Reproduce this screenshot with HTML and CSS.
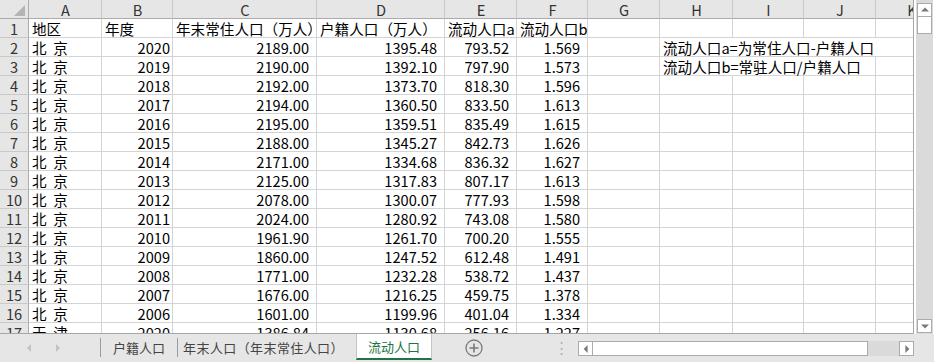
FILE: index.html
```html
<!DOCTYPE html>
<html lang="zh-CN">
<head>
    <meta charset="UTF-8">
    <title>流动人口</title>
    <link rel="stylesheet" href="styles.css">
</head>
<body>
    <div class="app">
        <div class="sheet-area">
            <div class="grid">
                <table class="cells">
                    <colgroup>
                        <col class="c-row">
                        <col style="width: 73px">
                        <col style="width: 71px">
                        <col style="width: 144px">
                        <col style="width: 128px">
                        <col style="width: 72px">
                        <col style="width: 71px">
                        <col style="width: 72px">
                        <col style="width: 73px">
                        <col style="width: 71px">
                        <col style="width: 72px">
                        <col style="width: 72px">
                    </colgroup>
                    <tr class="col-heads">
                        <th class="corner"></th>
                        <th>A</th><th>B</th><th>C</th><th>D</th><th>E</th><th>F</th>
                        <th>G</th><th>H</th><th>I</th><th>J</th><th>K</th>
                    </tr>
                    <tr>
                        <th class="rh">1</th>
                        <td>地区</td><td>年度</td><td>年末常住人口（万人）</td><td>户籍人口（万人）</td>
                        <td>流动人口a</td><td>流动人口b</td><td></td><td></td><td></td><td></td><td></td>
                    </tr>
                    <tr>
                        <th class="rh">2</th>
                        <td class="city">北  京</td><td class="y">2020</td><td class="n">2189.00</td><td class="n">1395.48</td>
                        <td class="n">793.52</td><td class="n">1.569</td><td></td>
                        <td colspan="4" class="note">流动人口a=为常住人口-户籍人口</td>
                    </tr>
                    <tr>
                        <th class="rh">3</th>
                        <td class="city">北  京</td><td class="y">2019</td><td class="n">2190.00</td><td class="n">1392.10</td>
                        <td class="n">797.90</td><td class="n">1.573</td><td></td>
                        <td colspan="3" class="note">流动人口b=常驻人口/户籍人口</td><td></td>
                    </tr>
                    <tr>
                        <th class="rh">4</th>
                        <td class="city">北  京</td><td class="y">2018</td><td class="n">2192.00</td><td class="n">1373.70</td>
                        <td class="n">818.30</td><td class="n">1.596</td><td></td><td></td><td></td><td></td><td></td>
                    </tr>
                    <tr>
                        <th class="rh">5</th>
                        <td class="city">北  京</td><td class="y">2017</td><td class="n">2194.00</td><td class="n">1360.50</td>
                        <td class="n">833.50</td><td class="n">1.613</td><td></td><td></td><td></td><td></td><td></td>
                    </tr>
                    <tr>
                        <th class="rh">6</th>
                        <td class="city">北  京</td><td class="y">2016</td><td class="n">2195.00</td><td class="n">1359.51</td>
                        <td class="n">835.49</td><td class="n">1.615</td><td></td><td></td><td></td><td></td><td></td>
                    </tr>
                    <tr>
                        <th class="rh">7</th>
                        <td class="city">北  京</td><td class="y">2015</td><td class="n">2188.00</td><td class="n">1345.27</td>
                        <td class="n">842.73</td><td class="n">1.626</td><td></td><td></td><td></td><td></td><td></td>
                    </tr>
                    <tr>
                        <th class="rh">8</th>
                        <td class="city">北  京</td><td class="y">2014</td><td class="n">2171.00</td><td class="n">1334.68</td>
                        <td class="n">836.32</td><td class="n">1.627</td><td></td><td></td><td></td><td></td><td></td>
                    </tr>
                    <tr>
                        <th class="rh">9</th>
                        <td class="city">北  京</td><td class="y">2013</td><td class="n">2125.00</td><td class="n">1317.83</td>
                        <td class="n">807.17</td><td class="n">1.613</td><td></td><td></td><td></td><td></td><td></td>
                    </tr>
                    <tr>
                        <th class="rh">10</th>
                        <td class="city">北  京</td><td class="y">2012</td><td class="n">2078.00</td><td class="n">1300.07</td>
                        <td class="n">777.93</td><td class="n">1.598</td><td></td><td></td><td></td><td></td><td></td>
                    </tr>
                    <tr>
                        <th class="rh">11</th>
                        <td class="city">北  京</td><td class="y">2011</td><td class="n">2024.00</td><td class="n">1280.92</td>
                        <td class="n">743.08</td><td class="n">1.580</td><td></td><td></td><td></td><td></td><td></td>
                    </tr>
                    <tr>
                        <th class="rh">12</th>
                        <td class="city">北  京</td><td class="y">2010</td><td class="n">1961.90</td><td class="n">1261.70</td>
                        <td class="n">700.20</td><td class="n">1.555</td><td></td><td></td><td></td><td></td><td></td>
                    </tr>
                    <tr>
                        <th class="rh">13</th>
                        <td class="city">北  京</td><td class="y">2009</td><td class="n">1860.00</td><td class="n">1247.52</td>
                        <td class="n">612.48</td><td class="n">1.491</td><td></td><td></td><td></td><td></td><td></td>
                    </tr>
                    <tr>
                        <th class="rh">14</th>
                        <td class="city">北  京</td><td class="y">2008</td><td class="n">1771.00</td><td class="n">1232.28</td>
                        <td class="n">538.72</td><td class="n">1.437</td><td></td><td></td><td></td><td></td><td></td>
                    </tr>
                    <tr>
                        <th class="rh">15</th>
                        <td class="city">北  京</td><td class="y">2007</td><td class="n">1676.00</td><td class="n">1216.25</td>
                        <td class="n">459.75</td><td class="n">1.378</td><td></td><td></td><td></td><td></td><td></td>
                    </tr>
                    <tr>
                        <th class="rh">16</th>
                        <td class="city">北  京</td><td class="y">2006</td><td class="n">1601.00</td><td class="n">1199.96</td>
                        <td class="n">401.04</td><td class="n">1.334</td><td></td><td></td><td></td><td></td><td></td>
                    </tr>
                    <tr>
                        <th class="rh">17</th>
                        <td class="city">天  津</td><td class="y">2020</td><td class="n">1386.84</td><td class="n">1130.68</td>
                        <td class="n">256.16</td><td class="n">1.227</td><td></td><td></td><td></td><td></td><td></td>
                    </tr>
                </table>
            </div>
            <div class="vscroll">
                <div class="sb-btn up"></div>
                <div class="sb-thumb-v"></div>
                <div class="sb-track"></div>
                <div class="sb-btn down"></div>
            </div>
        </div>
        <div class="tab-bar">
            <div class="tab-nav">
                <span class="nav-arrow left"></span>
                <span class="nav-arrow right"></span>
            </div>
            <div class="tab">户籍人口</div>
            <div class="tab wide">年末人口（年末常住人口）</div>
            <div class="tab active">流动人口</div>
            <div class="add-sheet">
                <svg width="18" height="18" viewBox="0 0 18 18">
                    <circle cx="9" cy="9" r="8" fill="none" stroke="#7a7a7a" stroke-width="1.3"/>
                    <path d="M9 4.5v9M4.5 9h9" stroke="#7a7a7a" stroke-width="1.6"/>
                </svg>
            </div>
            <div class="split-dots">⋮</div>
            <div class="hscroll">
                <div class="sb-btn left"></div>
                <div class="sb-thumb-h"></div>
                <div class="sb-track-h"></div>
                <div class="sb-btn right"></div>
            </div>
        </div>
    </div>
</body>
</html>
```

FILE: styles.css
```css
body {
    margin: 0;
    padding: 0;
    background-color: #ffffff;
    font-family: "Noto Sans CJK SC", "Liberation Sans", sans-serif;
    font-size: 14.6px;
    color: #000000;
}

.app {
    width: 934px;
    height: 362px;
    display: flex;
    flex-direction: column;
    overflow: hidden;
}

.sheet-area {
    display: flex;
    height: 334px;
}

.grid {
    width: 913px;
    height: 333px;
    border-right: 1px solid #a6a6a6;
    border-bottom: 1px solid #a6a6a6;
    overflow: hidden;
}

.cells {
    border-spacing: 0;
    table-layout: fixed;
    width: 948px;
}

.c-row {
    width: 29px;
}

.cells tr {
    height: 19px;
}

.cells td,
.cells th {
    box-sizing: border-box;
    height: 19px;
    padding: 0 2px 0 3px;
    border-right: 1px solid #d4d4d4;
    border-bottom: 1px solid #d4d4d4;
    white-space: pre;
    overflow: hidden;
    line-height: 17px;
    text-align: left;
    font-weight: normal;
    vertical-align: bottom;
}

.cells .n {
    text-align: right;
    padding-right: 7px;
}

.cells .y {
    text-align: right;
    padding-right: 2px;
}

.cells .note {
    overflow: visible;
}

.col-heads th {
    height: 19px;
    background-color: #e6e6e6;
    color: #333333;
    text-align: center;
    border-right: 1px solid #c9c9c9;
    border-bottom: 1px solid #ababab;
}

.col-heads .corner {
    position: relative;
    border-right: 1px solid #ababab;
}

.corner::after {
    content: "";
    position: absolute;
    right: 3px;
    bottom: 2px;
    width: 11px;
    height: 11px;
    background-color: #b4b4b4;
    clip-path: polygon(100% 0, 100% 100%, 0 100%);
}

.cells .rh {
    background-color: #e6e6e6;
    color: #333333;
    text-align: center;
    padding: 0;
    border-right: 1px solid #ababab;
    border-bottom: 1px solid #c9c9c9;
}

.vscroll {
    width: 17px;
    margin-left: 2px;
    background-color: #dadada;
    display: flex;
    flex-direction: column;
    padding-top: 3px;
    box-sizing: border-box;
    height: 334px;
}

.sb-btn {
    box-sizing: border-box;
    background-color: #ffffff;
    border: 1px solid #ababab;
    position: relative;
}

.vscroll .sb-btn {
    width: 15px;
    height: 14px;
    margin-left: 1px;
}

.sb-thumb-v {
    box-sizing: border-box;
    width: 15px;
    height: 17px;
    margin-left: 1px;
    background-color: #ffffff;
    border: 1px solid #ababab;
    border-top: none;
}

.sb-track {
    flex: 1;
}

.vscroll .down {
    margin-bottom: 1px;
}

.sb-btn::after {
    content: "";
    position: absolute;
    left: 50%;
    top: 50%;
    width: 0;
    height: 0;
    border: 4px solid transparent;
}

.sb-btn.up::after {
    border-bottom-color: #7a7a7a;
    border-top-width: 0;
    transform: translate(-50%, -60%);
}

.sb-btn.down::after {
    border-top-color: #7a7a7a;
    border-bottom-width: 0;
    transform: translate(-50%, -40%);
}

.sb-btn.left::after {
    border-right-color: #7a7a7a;
    border-left-width: 0;
    transform: translate(-60%, -50%);
}

.sb-btn.right::after {
    border-left-color: #7a7a7a;
    border-right-width: 0;
    transform: translate(-40%, -50%);
}

.tab-bar {
    height: 28px;
    background-color: #e6e6e6;
    display: flex;
    align-items: stretch;
    font-size: 13px;
    color: #444444;
}

.tab-nav {
    width: 100px;
    border-right: 1px solid #9c9c9c;
    margin: 4px 0 5px 0;
    position: relative;
}

.nav-arrow {
    position: absolute;
    top: 6px;
    width: 0;
    height: 0;
    border: 4px solid transparent;
}

.nav-arrow.left {
    left: 27px;
    border-right-color: #c2c2c2;
    border-left-width: 0;
}

.nav-arrow.right {
    left: 56px;
    border-left-color: #c2c2c2;
    border-right-width: 0;
}

.tab {
    width: 76px;
    text-align: center;
    line-height: 28px;
    position: relative;
}

.tab + .tab::before {
    content: "";
    position: absolute;
    left: 0;
    top: 4px;
    bottom: 5px;
    border-left: 1px solid #9c9c9c;
}

.tab.wide {
    width: 179px;
    padding-left: 4px;
    padding-right: 10px;
    box-sizing: border-box;
    letter-spacing: 0.4px;
}

.tab.active {
    box-sizing: border-box;
    background-color: #ffffff;
    color: #217346;
    border-left: 1px solid #c4c4c4;
    border-right: 1px solid #c4c4c4;
    border-bottom: 2px solid #217346;
    margin-bottom: 2px;
    line-height: 25px;
}

.tab.active::before {
    display: none;
}

.add-sheet {
    width: 82px;
    display: flex;
    align-items: center;
    justify-content: center;
    padding-left: 1px;
}

.split-dots {
    width: 20px;
    margin-left: 36px;
    margin-right: 7px;
    text-align: center;
    color: #b0b0b0;
    line-height: 26px;
    font-size: 15px;
}

.hscroll {
    width: 336px;
    height: 15px;
    margin-top: 7px;
    display: flex;
    background-color: #dadada;
}

.hscroll .sb-btn {
    width: 15px;
    height: 15px;
}

.sb-thumb-h {
    box-sizing: border-box;
    width: 275px;
    height: 15px;
    background-color: #ffffff;
    border: 1px solid #ababab;
    border-left: none;
}

.sb-track-h {
    flex: 1;
}
```
